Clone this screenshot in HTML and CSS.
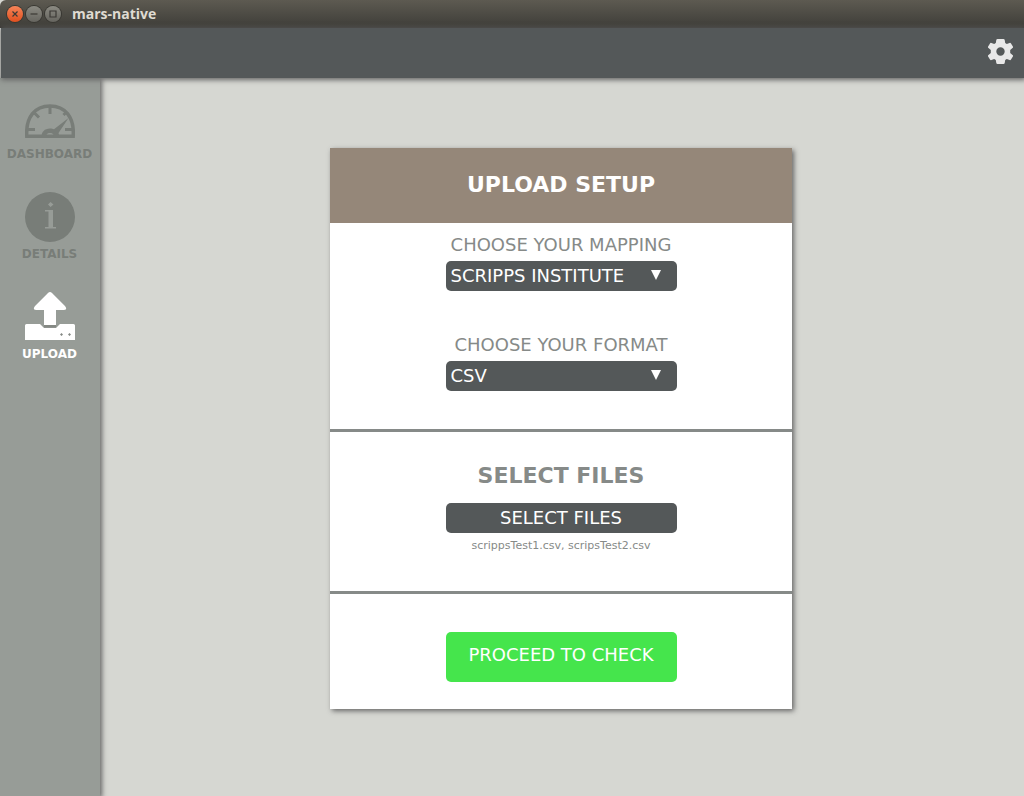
FILE: index.html
```html
<!DOCTYPE html>
<html lang="en">
<head>
<meta charset="utf-8">
<meta name="viewport" content="width=device-width, initial-scale=1">
<title>mars-native</title>
<link rel="stylesheet" href="styles.css">
</head>
<body>
<div class="window">
  <div class="titlebar">
    <button class="wm wm-close" type="button" aria-label="Close"><svg viewBox="0 0 16 16"><path d="M5.5 5.5l5 5M10.5 5.5l-5 5"/></svg></button>
    <button class="wm" type="button" aria-label="Minimize"><svg viewBox="0 0 16 16"><path d="M4.5 8h7"/></svg></button>
    <button class="wm" type="button" aria-label="Maximize"><svg viewBox="0 0 16 16"><path d="M5 5h6v6H5z"/></svg></button>
    <span class="window-title">mars-native</span>
  </div>
  <header class="topbar">
    <button class="settings" type="button" aria-label="Settings">
      <svg viewBox="0 0 25 25"><path fill-rule="evenodd" d="M9.500 0h6q1 0 1.200 1l.5 3 1.600.9 2.700-1q1-.4 1.500.5l1.900 3.200q.4.900-.4 1.500l-2.300 1.900v3l2.300 1.900q.8.600.4 1.500L23 20.600q-.5.900-1.500.5l-2.700-1-1.600.9-.5 3q-.2 1-1.200 1h-6q-1 0-1.200-1l-.5-3-1.600-.9-2.700 1q-1 .4-1.500-.5L.1 17.400q-.4-.9.4-1.500L2.800 14v-3L.5 9.100Q-.3 8.500.1 7.600L2 4.400q.5-.9 1.500-.5l2.700 1L7.800 4l.5-3q.2-1 1.200-1zM12.500 8.300a4.200 4.200 0 1 0 0 8.400 4.200 4.200 0 0 0 0-8.400z"/></svg>
    </button>
  </header>
  <div class="body">
    <nav class="sidebar">
      <a class="nav-item" href="#dashboard">
        <svg class="nav-icon" viewBox="0 0 50 50">
          <path fill="none" stroke="currentColor" stroke-width="3.500" d="M1.800 44.300C.5 25 10 14 25 14s24.500 11 23.200 30.300z"/>
          <path fill="none" stroke="currentColor" stroke-width="3" d="M25 15v7M8.500 20l5.500 5.500M41.500 20l-3 3M3 37.500h7M40 37.500h7"/>
          <path fill="currentColor" d="M16.500 45c0-5 3-8.500 8.500-8.500 1.500 0 3 .3 4 .8L43.500 26 33.500 41l1 4h-5.500a4 4 0 0 0-8 0z"/>
        </svg>
        <span>DASHBOARD</span>
      </a>
      <a class="nav-item" href="#details">
        <svg class="nav-icon" viewBox="0 0 50 50">
          <circle cx="25" cy="25" r="25" fill="currentColor"/>
          <path fill="#979c97" d="M25.500 10l3 2.500-3 2.500-2.500-2.500zM20 18h8v17h3v1.500H20V35h3.500V19.500H20z"/>
        </svg>
        <span>DETAILS</span>
      </a>
      <a class="nav-item nav-item-active" href="#upload" aria-current="page">
        <svg class="nav-icon" viewBox="0 0 50 50">
          <path fill="currentColor" d="M25 0Q26 0 27 1L40 14Q43 18 38.500 18H31V33H19V18H11.500Q7 18 10 14L23 1Q24 0 25 0z"/>
          <path fill="currentColor" d="M1.500 32H15L19 36H31L35 32H48.500Q50 32 50 33.500V48H0V33.500Q0 32 1.500 32z"/>
          <path fill="#858984" d="M19 33h12v2.500H19z"/>
          <path fill="#858984" d="M36.500 41l1.500 1.500-1.500 1.500-1.500-1.500zM44.500 41l1.500 1.500-1.500 1.500-1.500-1.500z"/>
        </svg>
        <span>UPLOAD</span>
      </a>
    </nav>
    <main class="content">
      <form class="card">
        <h1 class="card-header">UPLOAD SETUP</h1>
        <section class="options">
          <div class="field">
            <label for="mapping">CHOOSE YOUR MAPPING</label>
            <div class="select">
              <select id="mapping"><option>SCRIPPS INSTITUTE</option></select>
              <svg class="caret" viewBox="0 0 10 10"><path d="M0 0h10L5 10z"/></svg>
            </div>
          </div>
          <div class="field">
            <label for="format">CHOOSE YOUR FORMAT</label>
            <div class="select">
              <select id="format"><option>CSV</option></select>
              <svg class="caret" viewBox="0 0 10 10"><path d="M0 0h10L5 10z"/></svg>
            </div>
          </div>
        </section>
        <section class="files">
          <h2>SELECT FILES</h2>
          <button class="file-button" type="button">SELECT FILES</button>
          <p class="file-list">scrippsTest1.csv, scripsTest2.csv</p>
        </section>
        <section class="actions">
          <button class="proceed" type="button">PROCEED TO CHECK</button>
        </section>
      </form>
    </main>
  </div>
</div>
</body>
</html>
```

FILE: styles.css
```css
* {
  box-sizing: border-box;
}

body {
  margin: 0;
  font-family: "DejaVu Sans", Verdana, sans-serif;
  background: #d6d7d2;
}

button,
select {
  font-family: inherit;
  border: 0;
  cursor: pointer;
}

h1,
h2,
p {
  margin: 0;
}

.window {
  display: flex;
  flex-direction: column;
  min-height: 100vh;
}

.titlebar {
  display: flex;
  align-items: center;
  gap: 3px;
  height: 28px;
  padding: 0 6px 0 7px;
  background: linear-gradient(#5d5a51, #403f3a 92%, #33322e);
  border-radius: 6px 0 0 0;
}

.wm {
  width: 16px;
  height: 16px;
  padding: 0;
  border-radius: 50%;
  background: linear-gradient(#8b8a82, #66655f);
  box-shadow: 0 0 0 1px #383732;
}

.wm-close {
  background: linear-gradient(#f58458, #e1501f);
}

.wm svg {
  display: block;
  fill: none;
  stroke: #3b3935;
  stroke-width: 1.200;
}

.window-title {
  margin-left: 8px;
  font: bold 14px/20px "Open Sans", sans-serif;
  color: #dfdbd2;
}

.topbar {
  position: relative;
  z-index: 2;
  display: flex;
  justify-content: flex-end;
  align-items: center;
  height: 50px;
  margin-left: 1px;
  padding: 0 11px 3px 0;
  background: #545859;
  box-shadow: 1px 1px 5px 1px #666;
}

.settings {
  width: 25px;
  height: 25px;
  padding: 0;
  background: none;
}

.settings svg {
  display: block;
  fill: #e8e8e8;
}

.body {
  display: flex;
  flex: 1;
}

.sidebar {
  position: relative;
  z-index: 1;
  display: flex;
  flex-direction: column;
  flex: 0 0 100px;
  gap: 30px;
  padding: 14px 1px 0 0;
  background: #979c97;
  box-shadow: 1px 1px 5px 1px #666;
}

.nav-item {
  display: flex;
  flex-direction: column;
  align-items: center;
  gap: 4px;
  font-size: 12px;
  font-weight: bold;
  line-height: 16px;
  color: #787d78;
  text-decoration: none;
}

.nav-item-active {
  color: #fff;
}

.nav-icon {
  width: 50px;
  height: 50px;
}

.content {
  flex: 1;
  padding: 70px 2px 85px 0;
}

.card {
  width: 50%;
  min-width: 462px;
  margin: 0 auto;
  background: #fff;
  box-shadow: 2px 2px 5px #666;
}

.card-header {
  padding: 21px 0 22px;
  background: #958779;
  color: #fff;
  font-size: 22px;
  line-height: 32px;
  text-align: center;
}

.options,
.files,
.actions {
  display: flex;
  flex-direction: column;
  align-items: center;
}

.options {
  gap: 40px;
  padding: 8px 0 38px;
  border-bottom: 3px solid #868a88;
}

.field {
  display: flex;
  flex-direction: column;
  align-items: center;
  width: 50%;
  color: #868a88;
  font-size: 18px;
  line-height: 28px;
  white-space: nowrap;
}

.field label {
  padding-bottom: 2px;
}

.select {
  position: relative;
  width: 100%;
}

.select select {
  display: block;
  width: 100%;
  height: 30px;
  padding: 0 5px 2px;
  appearance: none;
  border-radius: 5px;
  background: #545859;
  color: #fff;
  font-size: 18px;
}

.caret {
  position: absolute;
  top: 9px;
  right: 16px;
  width: 10px;
  height: 10px;
  fill: #fff;
  pointer-events: none;
}

.files {
  padding: 29px 0 36px;
  border-bottom: 3px solid #868a88;
  color: #868a88;
}

.files h2 {
  margin-bottom: 12px;
  font-size: 22px;
  line-height: 30px;
}

.file-button,
.proceed {
  width: 50%;
  padding: 0 0 2px;
  border-radius: 5px;
  color: #fff;
  font-size: 18px;
}

.file-button {
  height: 30px;
  background: #545859;
}

.file-list {
  padding-top: 4px;
  font-size: 11px;
  line-height: 18px;
}

.actions {
  padding: 38px 0 27px;
}

.proceed {
  height: 50px;
  padding-bottom: 6px;
  background: #45e54c;
}
```
